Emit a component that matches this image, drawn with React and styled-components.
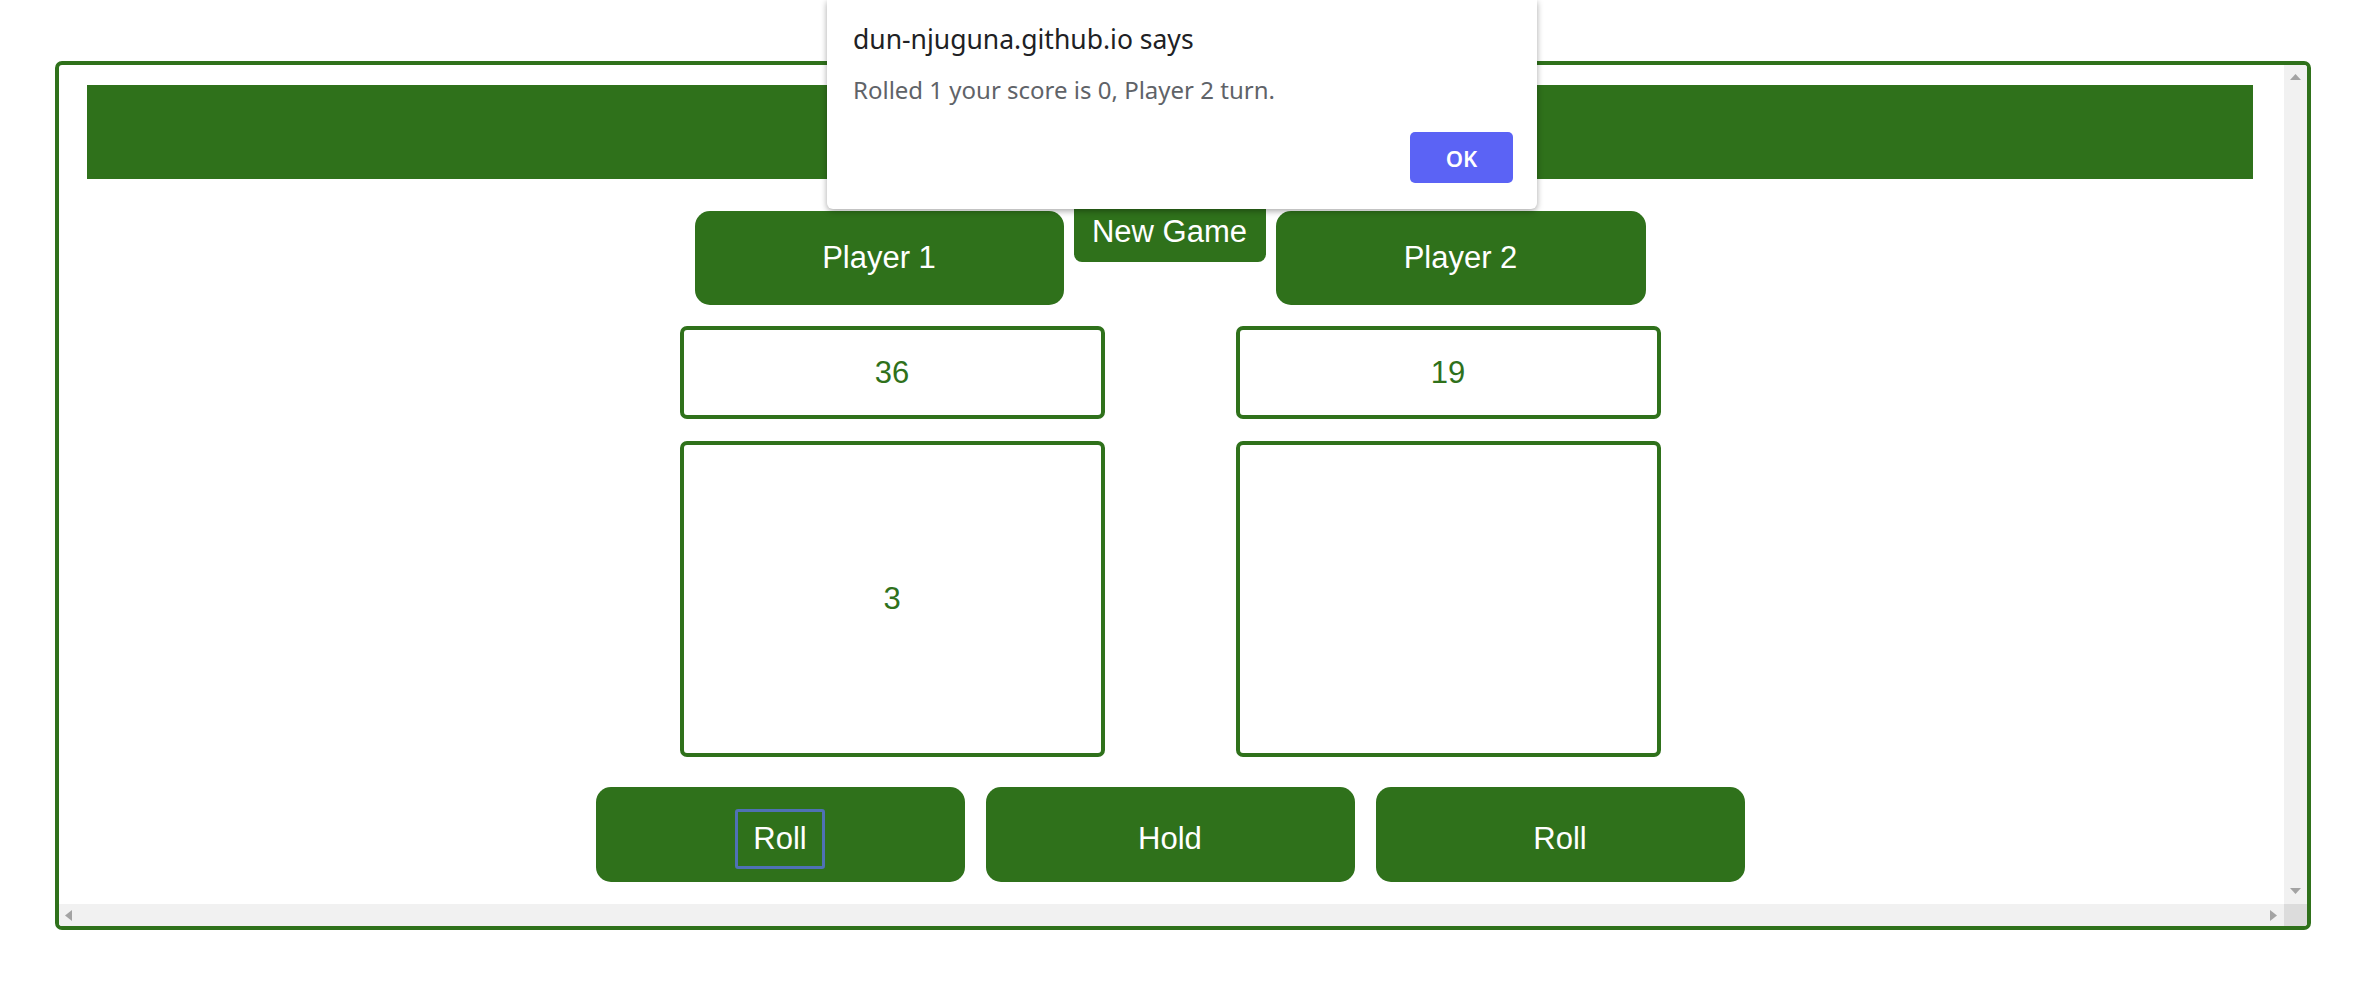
import React from 'react';
import styled, { createGlobalStyle } from 'styled-components';

const green = '#2f711b';

const GlobalStyle = createGlobalStyle`
  html, body {
    margin: 0;
    padding: 0;
    background: #fff;
  }
  body {
    font-family: "Liberation Sans", Arial, sans-serif;
  }
`;

const Page = styled.div`
  position: relative;
  width: 2363px;
  height: 1000px;
  padding: 61px 0 0 55px;
  box-sizing: border-box;
`;

const Frame = styled.div`
  width: 2256px;
  height: 869px;
  box-sizing: border-box;
  border: 4px solid ${green};
  border-radius: 7px;
  display: grid;
  grid-template-columns: 1fr 23px;
  grid-template-rows: 1fr 22px;
  overflow: hidden;
`;

const Viewport = styled.div`
  overflow: hidden;
  padding: 20px 0 0 28px;
`;

const Board = styled.div`
  width: 2166px;
  display: flex;
  flex-direction: column;
  align-items: center;
`;

const Banner = styled.div`
  width: 100%;
  height: 94px;
  background: ${green};
`;

const PlayerRow = styled.div`
  display: flex;
  align-items: flex-start;
  gap: 10px;
  margin-top: 18px;
`;

const GreenButton = styled.button`
  all: unset;
  box-sizing: border-box;
  display: flex;
  align-items: center;
  justify-content: center;
  background: ${green};
  color: #fff;
  font-family: "Liberation Sans", Arial, sans-serif;
  font-size: 31px;
  cursor: pointer;
`;

const PlayerButton = styled(GreenButton)`
  width: ${({ $w }) => $w}px;
  height: 94px;
  margin-top: 14px;
  border-radius: 15px;
`;

const NewGame = styled(GreenButton)`
  width: 192px;
  height: 65px;
  padding-top: 4px;
  border-radius: 8px;
`;

const Scores = styled.div`
  display: grid;
  grid-template-columns: 425px 425px;
  column-gap: 131px;
  row-gap: 22px;
  margin-top: 21px;
`;

const Box = styled.div`
  box-sizing: border-box;
  height: ${({ $h }) => $h}px;
  border: 4px solid ${green};
  border-radius: 7px;
  display: flex;
  align-items: center;
  justify-content: center;
  color: ${green};
  font-size: 31px;
`;

const Controls = styled.div`
  display: flex;
  gap: 21px;
  margin-top: 30px;
`;

const ControlButton = styled(GreenButton)`
  width: 369px;
  height: 95px;
  padding-top: 8px;
  border-radius: 15px;
`;

const Label = styled.span`
  display: inline-block;
  padding: 9px 15px;
  line-height: 36px;
  border: 3px solid ${({ $focus }) => ($focus ? '#4f71b5' : 'transparent')};
  border-radius: 3px;
`;

const VTrack = styled.div`
  background: #f1f1f1;
  display: flex;
  flex-direction: column;
  justify-content: space-between;
  align-items: center;
  padding: 9px 0 10px;
`;

const HTrack = styled.div`
  background: #f1f1f1;
  display: flex;
  justify-content: space-between;
  align-items: center;
  padding: 0 7px 0 6px;
`;

const Corner = styled.div`
  background: #dcdcdc;
`;

const Dialog = styled.div`
  position: absolute;
  top: 0;
  left: 827px;
  width: 710px;
  height: 209px;
  box-sizing: border-box;
  padding: 23px 24px 24px 26px;
  background: #fff;
  border-radius: 0 0 6px 6px;
  box-shadow: 0 2px 6px rgba(0, 0, 0, 0.35);
  font-family: "Noto Sans", "Open Sans", sans-serif;
  display: flex;
  flex-direction: column;
`;

const DialogTitle = styled.div`
  font-size: 26.5px;
  line-height: 32px;
  color: #202124;
`;

const DialogText = styled.div`
  margin-top: 19px;
  font-size: 24px;
  line-height: 32px;
  color: #5f6368;
`;

const DialogActions = styled.div`
  display: flex;
  justify-content: flex-end;
  margin-top: 26px;
`;

const OkButton = styled.button`
  all: unset;
  width: 103px;
  height: 51px;
  border-radius: 5px;
  background: #5b63f5;
  color: #fff;
  font-family: "Noto Sans", "Open Sans", sans-serif;
  font-weight: 600;
  font-size: 22px;
  display: flex;
  align-items: center;
  justify-content: center;
`;

const Arrow = ({ dir }) => {
  const pts = {
    up: '0,6 5.5,0 11,6',
    down: '0,0 11,0 5.5,6',
    left: '7,0 7,11 0,5.5',
    right: '0,0 7,5.5 0,11',
  }[dir];
  const vertical = dir === 'up' || dir === 'down';
  return (
    <svg width={vertical ? 11 : 7} height={vertical ? 6 : 11} viewBox={vertical ? '0 0 11 6' : '0 0 7 11'}>
      <polygon points={pts} fill="#a3a3a3" />
    </svg>
  );
};

export default function App() {
  return (
    <>
      <GlobalStyle />
      <Page>
        <Frame>
          <Viewport>
            <Board>
              <Banner />
              <PlayerRow>
                <PlayerButton $w={369}>Player 1</PlayerButton>
                <NewGame>New Game</NewGame>
                <PlayerButton $w={370}>Player 2</PlayerButton>
              </PlayerRow>
              <Scores>
                <Box $h={93}>36</Box>
                <Box $h={93}>19</Box>
                <Box $h={316}>3</Box>
                <Box $h={316}></Box>
              </Scores>
              <Controls>
                <ControlButton>
                  <Label $focus>Roll</Label>
                </ControlButton>
                <ControlButton>
                  <Label>Hold</Label>
                </ControlButton>
                <ControlButton>
                  <Label>Roll</Label>
                </ControlButton>
              </Controls>
            </Board>
          </Viewport>
          <VTrack>
            <Arrow dir="up" />
            <Arrow dir="down" />
          </VTrack>
          <HTrack>
            <Arrow dir="left" />
            <Arrow dir="right" />
          </HTrack>
          <Corner />
        </Frame>
        <Dialog>
          <DialogTitle>dun-njuguna.github.io says</DialogTitle>
          <DialogText>Rolled 1 your score is 0, Player 2 turn.</DialogText>
          <DialogActions>
            <OkButton>OK</OkButton>
          </DialogActions>
        </Dialog>
      </Page>
    </>
  );
}
